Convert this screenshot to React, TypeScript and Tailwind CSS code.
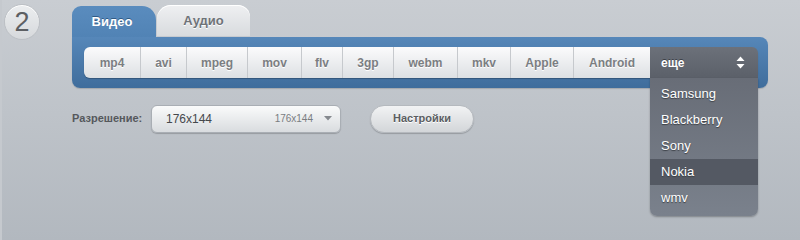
const formats = [
  { label: "mp4", w: "w-[56px]" },
  { label: "avi", w: "w-[46px]" },
  { label: "mpeg", w: "w-[61px]" },
  { label: "mov", w: "w-[54px]" },
  { label: "flv", w: "w-[41px]" },
  { label: "3gp", w: "w-[51px]" },
  { label: "webm", w: "w-[64px]" },
  { label: "mkv", w: "w-[53px]" },
  { label: "Apple", w: "w-[63px]" },
  { label: "Android", w: "w-[77px]" },
];

const more = ["Samsung", "Blackberry", "Sony", "Nokia", "wmv"];

function UpDown() {
  return (
    <svg width="9" height="13" viewBox="0 0 9 13" className="fill-white">
      <path d="M4.5 0.5 L8.5 5 L0.5 5 Z" />
      <path d="M4.5 12.5 L8.5 8 L0.5 8 Z" />
    </svg>
  );
}

export default function App() {
  return (
    <div className="relative flex w-[800px] h-[240px] overflow-hidden border-l-2 border-[#c5c9ce] bg-gradient-to-b from-[#c9cdd2] to-[#b2b8bf] font-['Liberation_Sans',Arial,sans-serif]">
      <div className="w-[70px] pt-1 pl-0.5">
        <div className="flex h-9 w-9 items-center justify-center rounded-full border border-[#bcc0c5] bg-gradient-to-b from-[#eceef0] to-[#d6d9dc] text-[27px] leading-none text-[#5c5f63] shadow-[inset_0_1px_0_#fff]">
          2
        </div>
      </div>

      <div className="flex flex-col pt-[5px]">
        <div className="flex h-[32px] items-end">
          <div className="flex h-[31px] w-[84px] items-center justify-center pr-1 rounded-tl-[9px] rounded-tr-[14px] bg-gradient-to-b from-[#5a8cbe] to-[#5183b5] text-[13px] font-bold text-white [text-shadow:0_-1px_0_#2f5a85]">
            Видео
          </div>
          <div className="mb-[1px] ml-[1px] flex h-[31px] w-[93px] items-center justify-center rounded-tl-[14px] rounded-tr-[12px] bg-gradient-to-b from-[#eff0f2] to-[#d8dbde] text-[13px] font-bold text-[#6f7378] shadow-[inset_0_1px_0_#fff] [text-shadow:0_1px_0_#fff]">
            Аудио
          </div>
        </div>

        <div className="w-[696px] rounded-b-[8px] rounded-tr-[8px] bg-gradient-to-b from-[#5687b9] to-[#3f6d9c] pb-[10px] pl-3 pr-2.5 pt-[10px] shadow-[0_1px_1px_rgba(0,0,0,0.15)]">
          <div className="flex h-[31px] rounded-[6px] shadow-[0_1px_1px_rgba(0,0,0,0.25)]">
            {formats.map((f, i) => (
              <div
                key={f.label}
                className={`${f.w} flex items-center justify-center border-[#c6c9cd] bg-gradient-to-b from-[#fbfbfc] to-[#dde0e3] text-[12px] font-bold text-[#7b7e82] [text-shadow:0_1px_0_#fff] ${i === 0 ? "rounded-l-[6px]" : "border-l"}`}
              >
                {f.label}
              </div>
            ))}
            <div className="relative flex w-[108px] items-center justify-between rounded-tr-[6px] bg-gradient-to-b from-[#6c717a] to-[#5b6069] pl-[11px] pr-[13px] text-[12px] font-bold text-white [text-shadow:0_-1px_0_#3d4148]">
              <span>еще</span>
              <UpDown />
              <div className="absolute left-0 top-full z-10 w-[108px] rounded-b-[7px] bg-gradient-to-b from-[#686d77] to-[#7a818c] pb-[5px] pt-[3px] shadow-[0_1px_2px_rgba(0,0,0,0.3)]">
                {more.map((m) => (
                  <div
                    key={m}
                    className={`flex h-[26px] items-center pl-[11px] text-[13px] font-normal text-white [text-shadow:0_1px_1px_#3a3e44] ${m === "Nokia" ? "bg-[#545963]" : ""}`}
                  >
                    {m}
                  </div>
                ))}
              </div>
            </div>
          </div>
        </div>

        <div className="mt-[16px] flex h-[29px] items-center">
          <span className="w-[79px] text-[11px] font-bold text-[#55585c]">Разрешение:</span>
          <div className="flex h-[28px] w-[190px] items-center rounded-[6px] border border-[#a9aeb4] bg-gradient-to-b from-[#fafbfb] to-[#d9dcdf] pl-[14px] pr-[8px] shadow-[0_1px_1px_rgba(0,0,0,0.2)]">
            <span className="text-[12px] text-[#45484c]">176x144</span>
            <span className="ml-auto text-[10px] text-[#7a7d81]">176x144</span>
            <svg width="8" height="5" viewBox="0 0 8 5" className="ml-[11px] fill-[#85898e]">
              <path d="M0 0 L8 0 L4 4.5 Z" />
            </svg>
          </div>
          <div className="ml-[29px] flex h-[28px] w-[104px] items-center justify-center rounded-full border border-[#b5b9be] bg-gradient-to-b from-[#f2f3f4] to-[#d3d6d9] text-[11px] font-bold text-[#5a5d61] shadow-[0_1px_1px_rgba(0,0,0,0.2)] [text-shadow:0_1px_0_#fff]">
            Настройки
          </div>
        </div>
      </div>
    </div>
  );
}
